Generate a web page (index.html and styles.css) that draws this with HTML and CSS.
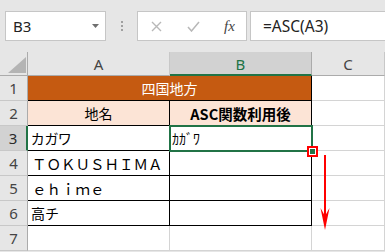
FILE: index.html
```html
<!DOCTYPE html>
<html lang="ja">
<head>
<meta charset="utf-8">
<link rel="stylesheet" href="styles.css">
</head>
<body>
<div class="fbar">
  <div class="namebox">
    <span class="nb-text">B3</span>
    <svg class="dd" width="7" height="4" viewBox="0 0 7 4"><polygon points="0,0 7,0 3.5,4" fill="#6f6f6f"/></svg>
  </div>
  <div class="sep"><i></i><i></i><i></i></div>
  <div class="btns">
    <svg width="11" height="11" viewBox="0 0 11 11"><path d="M1 1 L10 10 M10 1 L1 10" stroke="#b8b8b8" stroke-width="1.4" fill="none"/></svg>
    <svg width="13" height="11" viewBox="0 0 13 11"><path d="M1 6 L4.5 10 L12 1" stroke="#b8b8b8" stroke-width="1.5" fill="none"/></svg>
    <span class="fx">fx</span>
  </div>
  <div class="formula">=ASC(A3)</div>
</div>
<div class="sheet">
  <div class="corner"><span class="tri"></span></div>
  <div class="hd">A</div>
  <div class="hd sel">B</div>
  <div class="hd">C</div>

  <div class="rh">1</div>
  <div class="c t title">四国地方</div>
  <div class="c"></div>

  <div class="rh">2</div>
  <div class="c t head">地名</div>
  <div class="c t head bold">ASC関数利用後</div>
  <div class="c"></div>

  <div class="rh sel">3</div>
  <div class="c t prop">カガワ</div>
  <div class="c t active">ｶｶﾞﾜ<span class="frame"></span><span class="mark"><span class="handle"></span></span></div>
  <div class="c"></div>

  <div class="rh">4</div>
  <div class="c t wide">ＴＯＫＵＳＨＩＭＡ</div>
  <div class="c t"></div>
  <div class="c"></div>

  <div class="rh">5</div>
  <div class="c t wide">ｅｈｉｍｅ</div>
  <div class="c t"></div>
  <div class="c"></div>

  <div class="rh">6</div>
  <div class="c t prop">高チ</div>
  <div class="c t"></div>
  <div class="c"></div>

  <div class="rh">7</div>
  <div class="c"></div>
  <div class="c"></div>
  <div class="c"></div>

  <svg class="arrow" width="14" height="80" viewBox="0 0 14 80">
    <line x1="7" y1="0" x2="7" y2="66" stroke="#ff0000" stroke-width="2"/>
    <polygon points="2.5,53 7,61 11.5,53 7,75" fill="#ff0000"/>
  </svg>
</div>
</body>
</html>
```

FILE: styles.css
```css
* { box-sizing: border-box; }
html, body { margin: 0; padding: 0; }
body {
  width: 385px;
  height: 252px;
  overflow: hidden;
  background: #e6e6e6;
  font-family: "Noto Sans", "Noto Sans CJK JP", sans-serif;
}

.fbar {
  height: 52px;
  display: flex;
  align-items: flex-start;
  padding: 11px 0 0 5px;
  background: #e6e6e6;
}
.namebox {
  width: 101px;
  height: 30px;
  background: #fff;
  border: 1px solid #c6c6c6;
  display: flex;
  align-items: center;
  justify-content: space-between;
  padding: 0 6px 0 7px;
}
.nb-text { font-size: 15px; color: #222; }
.sep {
  width: 31px;
  height: 30px;
  display: flex;
  flex-direction: column;
  align-items: center;
  justify-content: center;
  gap: 2px;
}
.sep i { display: block; width: 2px; height: 2px; background: #a0a0a0; }
.btns {
  width: 110px;
  height: 30px;
  background: #fff;
  border: 1px solid #c6c6c6;
  display: flex;
  align-items: center;
  padding-left: 13px;
  gap: 25px;
}
.fx {
  font-family: "Liberation Serif", serif;
  font-style: italic;
  font-size: 15px;
  color: #444;
  margin-left: -1px;
}
.formula {
  flex: 1;
  height: 30px;
  margin-left: 3px;
  margin-right: -2px;
  background: #fff;
  border: 1px solid #c6c6c6;
  display: flex;
  align-items: center;
  padding-left: 12px;
  font-size: 15.5px;
  color: #222;
}

.sheet {
  position: relative;
  display: grid;
  grid-template-columns: 28px 142px 142px 73px;
  grid-template-rows: 24px repeat(7, 25px);
  background: #fff;
}
.corner {
  position: relative;
  background: #e6e6e6;
  border-right: 1px solid #ababab;
  border-bottom: 1px solid #ababab;
}
.tri {
  position: absolute;
  left: 8px;
  top: 5px;
  width: 0;
  height: 0;
  border-left: 18px solid transparent;
  border-bottom: 16px solid #b4b4b4;
}
.hd {
  background: #e6e6e6;
  border-right: 1px solid #c8c8c8;
  border-bottom: 1px solid #ababab;
  display: flex;
  align-items: center;
  justify-content: center;
  font-size: 15px;
  color: #444;
  padding-top: 1px;
}
.hd.sel {
  background: #d2d2d2;
  border-bottom: 2px solid #217346;
  border-right-color: #ababab;
  color: #217346;
}
.rh {
  background: #e6e6e6;
  border-right: 1px solid #ababab;
  border-bottom: 1px solid #c8c8c8;
  display: flex;
  align-items: center;
  justify-content: center;
  font-size: 15px;
  color: #444;
}
.rh.sel {
  background: #d2d2d2;
  border-right: 2px solid #217346;
  color: #2b2b2b;
}

.c {
  border-right: 1px solid #d4d4d4;
  border-bottom: 1px solid #d4d4d4;
  display: flex;
  align-items: center;
  padding-left: 3px;
  font-family: "Noto Sans CJK JP", sans-serif;
  font-size: 14px;
  color: #000;
  white-space: nowrap;
}
.c.t {
  border-right-color: #000;
  border-bottom-color: #000;
}
.title {
  grid-column: span 2;
  background: #c55a11;
  color: #fff;
  justify-content: center;
  padding-left: 0;
}
.head {
  background: #fce4d6;
  justify-content: center;
  padding-left: 0;
}
.bold { font-weight: 700; font-size: 14.5px; }
.prop { font-feature-settings: "palt"; letter-spacing: 0.5px; }
.wide { font-size: 14.5px; padding-left: 4px; }
.active {
  position: relative;
  padding-left: 2px;
}
.frame {
  position: absolute;
  left: -1px;
  top: -1px;
  right: -2px;
  bottom: -2px;
  border: 2px solid #217346;
  pointer-events: none;
}
.mark {
  position: absolute;
  right: -7px;
  bottom: -7px;
  width: 11px;
  height: 11px;
  border: 2px solid #ff0000;
  background: #fff;
  display: flex;
  align-items: center;
  justify-content: center;
}
.handle {
  width: 5px;
  height: 5px;
  background: #217346;
}
.arrow {
  position: absolute;
  left: 318px;
  top: 103px;
}
```
